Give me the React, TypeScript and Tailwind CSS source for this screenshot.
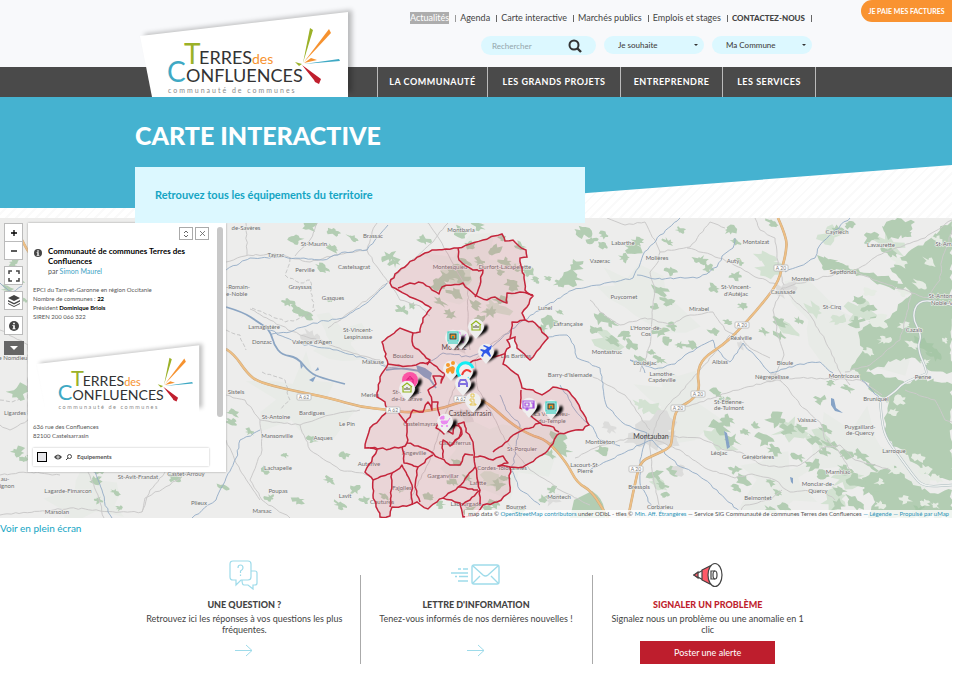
import React from "react";

type Pt = [number, number];

/* ---------- geometry helpers for the map ---------- */

const noise = (n: number) => {
  const v = Math.sin(n * 127.1) * 43758.5453;
  return v - Math.floor(v) - 0.5;
};

const parse = (s: string): Pt[] =>
  s.split(" ").map((p) => p.split(",").map(Number) as Pt);

/* Straight segments broken into short, slightly irregular steps. */
const rough = (s: string, amp: number, closed = false) => {
  const pts = parse(s);
  if (closed) pts.push(pts[0]);
  let d = `M${pts[0][0]},${pts[0][1]}`;
  for (let i = 1; i < pts.length; i++) {
    const [x0, y0] = pts[i - 1];
    const [x1, y1] = pts[i];
    const steps = Math.max(1, Math.round(Math.hypot(x1 - x0, y1 - y0) / 4));
    for (let k = 1; k <= steps; k++) {
      const t = k / steps;
      const j = k === steps ? 0 : amp;
      const x = x0 + (x1 - x0) * t + noise(x0 + y1 * 3 + k) * j;
      const y = y0 + (y1 - y0) * t + noise(y0 * 2 + x1 + k * 5) * j;
      d += `L${x.toFixed(1)},${y.toFixed(1)}`;
    }
  }
  return closed ? d + "Z" : d;
};

const smooth = (s: string) => {
  const p = parse(s);
  let d = `M${p[0][0]},${p[0][1]}`;
  for (let i = 1; i < p.length - 1; i++) {
    const mx = (p[i][0] + p[i + 1][0]) / 2;
    const my = (p[i][1] + p[i + 1][1]) / 2;
    d += `Q${p[i][0]},${p[i][1]} ${mx},${my}`;
  }
  const last = p[p.length - 1];
  return d + `L${last[0]},${last[1]}`;
};

const patch = (cx: number, cy: number, r: number) => {
  const n = 15;
  const tilt = noise(cx * 3.3 + cy) * 0.9;
  let d = "";
  for (let i = 0; i < n; i++) {
    const a = (i / n) * Math.PI * 2;
    const k = r * (0.95 + noise(cx * 1.7 + cy * 2.3 + i * 9.1) * 1.1);
    const x = cx + Math.cos(a) * k * 1.1 + Math.sin(a) * k * tilt;
    const y = cy + Math.sin(a) * k * 0.8 + Math.cos(a) * k * 0.2;
    d += `${i ? "L" : "M"}${x.toFixed(1)},${y.toFixed(1)}`;
  }
  return d + "Z";
};

const patches = (s: string) =>
  s
    .split(" ")
    .map((p) => p.split(",").map(Number))
    .map(([x, y, r]) => patch(x, y, r))
    .join("");

/* ---------- map data ---------- */

const WOODS =
  "296,240,6 310,226,6 334,232,5 332,248,5 352,238,4 390,257,6 395,262,5 424,240,5 322,268,5 288,302,6 305,314,6 296,309,5 330,300,3 402,310,5 412,306,4 " +
  "455,272,7 465,262,5 480,262,5 462,278,6 438,285,6 447,276,6 495,250,6 505,262,5 515,268,5 520,246,5 503,238,4 470,245,4 460,232,6 478,226,5 455,293,6 440,302,5 450,314,5 475,305,5 490,312,6 500,300,5 480,318,4 512,285,6 528,272,5 500,272,4 536,280,4 548,278,3 " +
  "571,278,8 560,283,5 576,265,6 583,232,6 592,240,4 550,322,7 543,328,5 560,312,3 " +
  "604,235,4 603,245,4 632,248,7 638,242,5 625,258,5 680,230,4 668,242,4 671,271,5 700,260,6 708,268,5 730,230,5 735,242,4 773,223,5 735,276,5 740,262,4 714,288,5 742,306,4 660,290,6 668,302,6 656,306,4 600,318,7 610,322,6 612,340,6 596,330,5 625,335,5 630,345,6 660,332,6 667,340,5 672,326,5 680,345,4 692,345,5 714,332,5 728,322,4 764,332,4 781,322,6 780,335,5 799,321,4 640,360,5 660,360,5 652,352,4 " +
  "19,392,8 18,452,6 25,459,4 34,460,6 95,480,5 115,492,4 175,478,5 98,362,5 100,470,6 223,487,4 233,413,5 232,422,5 98,500,4 120,508,4 12,270,6 20,280,5 8,290,5 14,262,4 24,300,3 " +
  "250,432,4 265,470,4 298,500,5 330,480,5 345,455,4 355,490,5 312,440,4 285,455,3 340,505,5 365,500,4 270,498,4 " +
  "385,497,4 400,490,3 430,497,5 440,505,4 452,482,5 467,478,4 456,462,4 498,485,6 505,478,4 495,503,5 488,508,4 470,510,6 520,511,6 " +
  "558,440,8 562,450,7 550,454,5 543,500,5 553,490,4 " +
  "602,451,5 655,475,6 662,485,5 675,472,6 665,495,4 720,427,8 732,440,7 728,420,6 745,432,4 717,393,5 725,400,4 755,425,4 777,420,8 788,430,7 765,440,8 774,450,6 800,428,5 735,470,5 742,480,6 736,488,4 770,482,5 778,492,4 798,457,5 813,465,6 822,475,5 830,445,6 826,430,5 815,440,6 847,388,5 820,400,5 830,382,4 845,470,6 860,455,6 855,480,7 840,490,6 870,465,6 838,505,7 855,503,8 870,490,7 785,508,5 770,510,5 825,452,5 846,455,5 " +
  "838,230,5 850,225,4 858,300,5 868,308,6 856,322,6 875,322,5 905,233,5 872,238,6 890,252,6 830,262,7 845,268,6";

const LIGHT_WOODS =
  "770,268,11 766,258,8 815,310,8 838,320,6 650,408,8 641,405,6 718,440,14 660,485,8 790,430,12 845,478,12 835,500,12 830,235,9 860,312,14 790,330,8 495,480,10 820,440,10 610,340,14 100,330,8 456,277,12 495,308,12 890,245,12";

const CLEARINGS =
  "900,262,7 920,285,6 905,325,5 880,322,7 884,340,5 930,262,6 938,240,5 903,292,5 925,362,4 912,345,5 870,292,5 900,400,5 893,412,4 918,458,5 925,470,5 937,478,5 893,470,5 880,482,4 905,500,5 925,503,4 880,505,4 935,505,4 868,352,5 945,340,3";

const BIG_WOODS = [
  "817,255 836,262 860,272 885,276 903,284 890,268 905,256 925,242 945,225 952,221 952,372 928,370 915,358 890,362 866,372 850,370 862,352 858,332 872,322 890,318 902,302 912,294 880,284 850,272 822,268",
  "857,371 882,374 905,384 920,378 952,384 952,480 932,478 912,462 902,452 888,440 884,418 889,402 872,392",
  "862,478 880,470 896,466 905,478 922,490 938,494 952,490 952,518 868,518 874,500",
  "882,226 895,220 915,222 905,236 888,240",
];

const DARK_WOODS = "925,345,8 935,355,6 918,510,5 935,300,5";

const TOWNS =
  "310,336,8 318,340,6 655,425,14 648,440,12 668,436,10 635,440,8 780,292,8 790,286,6 740,345,5 775,378,6 680,470,6 552,500,6 465,414,8 456,347,7 610,428,6";

const RIVERS = [
  "226,270 250,258 280,257 323,260 345,252 367,250 375,240 388,225",
  "272,334 290,332 313,323 343,318 362,306 372,298 387,283",
  "270,330 297,343 337,350 377,362 387,368 400,366",
  "428,364 443,353 470,357 490,348 500,340 517,325 547,305 573,290 600,285 633,278 643,255 660,235 680,218",
  "637,275 655,279 677,278 700,277 717,267 722,256 733,248 735,238",
  "548,337 567,335 574,345 577,358 600,368 607,407 623,423 647,433 640,460 640,483 652,508",
  "590,470 610,460 640,445 652,440 677,465 697,474 717,490 740,512",
  "645,373 640,362 630,360 655,369 675,364 685,355 697,348 713,340 715,348 730,362 743,343 757,358 770,373 800,364 820,362 833,373",
  "785,272 800,266 815,258 820,245 835,230 850,218",
  "862,380 870,388 880,400",
  "95,472 102,490 108,512 112,518",
  "192,518 208,505 216,500 226,478 236,458 240,440 260,430",
  "560,385 575,410 590,425 600,440 620,446",
  "500,395 506,410 520,425 512,470 520,490 540,505",
  "0,283 12,292 22,286",
];

const MAJOR_RIVERS = [
  "226,307 243,312 258,322 270,330 274,345 282,355 297,357 310,373 322,378 345,384",
  "386,370 400,368 414,370 425,372 436,388",
];

const WHITE_RIVERS = [
  "880,398 881,415 885,437 900,457 912,474 923,487 952,485",
  "883,400 895,392 903,383 923,375 928,373 917,348 922,335 912,318 918,300 940,302 952,305",
];

const MOTORWAYS = [
  "778,218 787,238 786,252 783,265 777,285 757,310 737,332 723,345 703,358 697,373 700,390 690,402 677,408 673,423 672,440 670,448 652,456 640,462 634,488 628,518",
  "226,349 234,354 247,373 258,382 290,390 330,398 360,407 390,410 410,413 440,409 460,402 475,399 487,402 510,423 530,435 547,440 567,463 577,483 592,491 608,518",
  "22,240 27,250 32,256",
];

const ROADS = [
  "226,262 245,256 275,254 310,262 335,255 367,250 373,262 388,282",
  "246,218 247,255",
  "320,218 310,240 295,256",
  "367,250 372,232 380,218",
  "250,309 270,320 300,335 318,340 350,352 380,360 386,366",
  "328,328 350,312 372,296 392,278 410,262 433,242 450,220",
  "390,283 400,300 420,306 430,316",
  "424,218 440,240 452,262 468,290 468,320 470,350",
  "510,330 490,345 475,360 460,372 452,395 440,430 430,460 410,500",
  "475,360 478,390 490,410 505,440 530,470 560,490 590,505",
  "590,300 600,312 620,325 645,318 655,320 670,325 690,315 713,312 725,330 737,335",
  "607,218 625,225 645,222 655,240 660,252 658,262 650,272 655,290 652,320 650,345 640,372",
  "660,252 690,247 710,222 725,228",
  "687,248 712,255 730,262 752,275 777,285",
  "755,218 760,230 775,238 778,265 784,285",
  "782,288 800,305 812,318 825,340 840,372 850,385",
  "782,288 773,310 778,335 784,355 775,375 785,385 800,405 822,425",
  "782,288 820,278 855,270 885,252 925,238 952,220",
  "855,272 880,282 912,293 952,305",
  "740,335 750,348 770,358",
  "730,335 700,370 660,415 652,436",
  "673,410 700,402 730,392 775,380 800,378 860,380 882,395",
  "655,436 700,438 715,445 725,450 740,452 762,465 782,467 800,465 822,448 840,445 855,460 890,470",
  "822,425 825,440 838,450 850,470",
  "655,440 680,450 705,468 735,478 752,474 775,480 790,492 822,490 835,500",
  "650,440 652,470 658,500 660,518",
  "650,436 620,440 595,448 575,458",
  "590,375 625,395 650,430",
  "735,518 745,505 770,500 782,490",
  "0,330 28,345 28,420 10,430 0,425",
  "226,395 245,400 260,420 262,450 250,480 262,500 290,518",
  "260,420 300,425 330,415 360,410",
  "300,425 310,450 340,470 370,475",
  "226,440 240,470 260,500",
  "88,472 98,495 104,518",
  "165,472 150,490 142,512",
  "190,470 170,485 145,498 142,512 120,512 70,508 0,515",
  "0,475 30,472 60,475",
  "912,293 905,320 900,340 870,365 845,372",
  "952,230 942,260 940,280 930,295",
  "905,390 935,400 945,420 952,422",
];

const LIMITS = [
  "290,258 285,275 300,283 310,280 312,300 315,310 300,318 285,322 270,315 250,308",
  "226,330 240,335 246,350",
  "0,400 12,402 22,398",
  "262,372 285,380 290,400 280,410",
];

const TERRITORY =
  "390,283 395,274 408,264 420,256 432,250 446,249 458,248 470,244 483,240 494,236 502,234 505,241 513,240 519,246 526,250 527,257 520,258 522,268 524,278 525,290 533,296 527,307 522,313 525,320 535,323 548,338 540,348 530,360 517,348 515,337 507,340 510,347 505,353 503,364 518,375 522,388 533,390 542,395 553,387 567,390 577,402 583,413 589,425 583,430 568,432 557,435 550,447 542,455 523,467 510,467 510,492 497,502 483,505 475,515 463,517 460,503 443,498 437,502 428,509 417,502 410,505 392,507 390,516 380,517 373,495 373,480 365,472 377,450 365,448 370,428 388,410 385,402 377,397 380,377 388,364 382,342 400,328 413,333 420,332 423,318 431,308 422,302 410,297 398,290 392,287";

const BOUNDARIES = [
  "458,248 459,260 466,266 473,270 483,270 480,285 475,297",
  "398,288 410,283 423,283 432,290 439,294 442,287 463,283 475,295 487,300 495,297 507,303 507,293 520,292 533,295",
  "413,333 412,341 415,348 430,360 427,365",
  "387,364 408,366 430,362 443,373 460,368 477,360 492,357 506,354",
  "525,320 512,322 510,338",
  "388,410 398,412 406,423 413,410 423,412 428,402 432,410 432,402 428,390 436,384 433,376 443,377 441,383 445,372",
  "432,402 438,402 438,410 440,418 436,428 444,434 446,430 453,434 455,425 461,428 459,438 450,446 443,440 443,458",
  "452,445 462,434 458,424 464,422 466,432 473,442 474,457 480,456 493,460 503,456 508,463 498,466 510,467",
  "493,452 502,446 517,433 540,423 530,415 520,408 521,390",
  "540,423 550,426 559,432",
  "407,423 407,443 418,446 433,453 450,465 460,465 465,454 473,455",
  "370,448 390,449 402,447 407,443",
  "402,447 404,463 418,467 433,455",
  "418,467 415,487 420,502",
  "373,480 392,473 402,465 412,485 412,505",
  "392,473 390,507",
  "475,467 465,479 458,487 443,498",
  "474,457 477,478 480,490 480,504",
  "458,487 468,489 478,490",
  "462,505 470,500 480,490",
];

type Label = [number, number, string];
const LABELS: Label[] = [
  [246, 230, "de-Savères"], [276, 257, "Tayrac"], [314, 246, "St-Maurin"], [373, 238, "Brassac"],
  [305, 272, "Perville"], [354, 269, "Castelsagrat"], [238, 289, "-Romain-"], [236, 296, "le-Noble"],
  [300, 289, "Grayssas"], [333, 300, "Gasques"], [264, 329, "Lamagistère"], [262, 344, "Donzac"],
  [312, 344, "Valence d'Agen"], [358, 332, "St-Vincent-"], [358, 339, "Lespinasse"], [373, 364, "Malause"],
  [403, 358, "Boudou"], [461, 232, "Montbarla"], [450, 269, "Montesquieu"], [505, 269, "Durfort-Lacapelette"],
  [545, 310, "Lunel"], [568, 326, "Lafrançaise"], [516, 358, "Les Barthes"], [570, 377, "Barry-d'Islemade"],
  [607, 354, "Montastruc"], [370, 397, "Merles"], [407, 394, "St-Nicolas-"], [407, 401, "de-la-Grave"],
  [421, 426, "Castelmayran"], [455, 445, "Castelferrus"], [414, 455, "Angeville"], [443, 478, "Garganvillar"],
  [402, 490, "Fajolles"], [382, 504, "Coutures"], [478, 485, "Lafitte"], [466, 506, "Labourgade"],
  [502, 470, "Cordes-Tolosannes"], [522, 451, "St-Porquier"], [552, 416, "La Ville-Dieu-"], [552, 423, "du-Temple"],
  [559, 499, "Montech"], [585, 467, "Lacourt-St-"], [585, 473, "Pierre"], [600, 444, "Montbeton"],
  [516, 509, "Bourret"], [369, 466, "Auterive"], [345, 498, "Lavit"],
  [312, 415, "Bardigues"], [276, 419, "St-Antoine"], [277, 438, "Mansonville"], [278, 470, "Lachapelle"],
  [278, 493, "Poupas"], [262, 513, "Marsac"], [323, 440, "Asques"], [347, 426, "Le Pin"],
  [623, 245, "Labarthe"], [657, 260, "Molières"], [600, 263, "Vazerac"], [733, 263, "Auty"],
  [756, 244, "Montalzat"], [837, 234, "Cayriech"], [881, 247, "Lavaurette"], [948, 246, "St-Amans"],
  [843, 274, "Septfonds"], [803, 281, "Monteils"], [783, 294, "Caussade"], [736, 289, "St-Vincent-"],
  [736, 296, "d'Autéjac"], [624, 299, "Puycornet"], [699, 311, "Mirabel"], [832, 309, "St-Cirq"],
  [944, 298, "St-Antonin-"], [944, 305, "Noble-Val"], [646, 330, "L'Honor-de-"], [646, 336, "Cos"],
  [741, 340, "Réalville"], [914, 332, "Cazals"], [645, 365, "Loubéjac"], [720, 364, "Albias"],
  [785, 365, "Bioule"], [662, 376, "Lamothe-"], [662, 382, "Capdeville"], [772, 379, "Nègrepelisse"],
  [844, 378, "Montricoux"], [923, 379, "Penne"], [729, 404, "St-Étienne-"], [729, 410, "de-Tulmont"],
  [876, 401, "Bruniquel"], [807, 422, "Vaissac"], [860, 429, "Puygaillard-"], [860, 435, "de-Quercy"],
  [719, 455, "Léojac"], [758, 459, "Génébrières"], [894, 453, "Larroque"], [838, 474, "Marnhiac"],
  [818, 486, "Monclar-de-"], [818, 493, "Quercy"], [639, 489, "Bressols"], [758, 500, "Belmontet"],
  [660, 509, "Corbarieu"], [13, 360, "e Nomdieu"], [15, 415, "Ligardes"], [5, 481, "au-"],
  [7, 488, "ignon"], [138, 479, "St-Avit-Frandat"], [186, 476, "Castet-Arrouy"], [68, 493, "Lagarde-Fimarcon"],
  [57, 514, "Marsolan"], [199, 505, "Plieux"], [236, 394, "Sistels"],
];

const SHIELDS: Pt[] = [[781, 268], [742, 325], [698, 394], [678, 408], [636, 469]];

/* ---------- pins ---------- */

type PinKind = "museum" | "house" | "plane" | "paw" | "sport" | "bag" | "car" | "info" | "stroller" | "van";

const Glyph = ({ kind }: { kind: PinKind }) => {
  switch (kind) {
    case "museum":
      return (
        <g fill="none" stroke="#3ccfc0" strokeWidth="1.2">
          <rect x="-5" y="-5" width="10" height="9" />
          <path d="M-5,6H5" />
          <rect x="-3" y="-3" width="6" height="5" fill="#f08a24" stroke="#25584e" />
          <path d="M-1,-1H1V1H-1Z" fill="#27a090" stroke="none" />
        </g>
      );
    case "house":
      return (
        <g fill="none" stroke="#93b51d" strokeWidth="1.2">
          <path d="M-5,-1L0,-5L5,-1M-4,-1V4H4V-1" />
          <path d="M-2,2V0M0,2V-1M2,2V0" stroke="#50502a" strokeWidth="1" />
        </g>
      );
    case "plane":
      return <path d="M-5,5L-3,1L-6,-1L-5,-2L-1,-1L1,-3L-3,-5L-2,-6L3,-4L6,-6L5,-2L3,0L5,5L4,6L0,2L-2,3L-3,6Z" fill="#3158e8" />;
    case "paw":
      return (
        <g fill="#f59a2b">
          <circle cx="-3" cy="-3" r="2" />
          <circle cx="2" cy="-5" r="2" />
          <path d="M-5,1L-1,-1L2,-2L4,0L3,5L1,6L-1,3L-3,6L-5,4Z" />
        </g>
      );
    case "sport":
      return (
        <g fill="none">
          <path d="M4,7A8,8 0 1 1 8,-3" stroke="#12eef4" strokeWidth="3" />
          <path d="M-3,4Q0,-4 6,1" stroke="#ee3d35" strokeWidth="2" />
        </g>
      );
    case "bag":
      return (
        <g>
          <circle r="8" fill="#fb55a5" />
          <path d="M-3,-1H3V4H-3ZM-2,-1Q0,-6 2,-1" fill="none" stroke="#e0187e" />
        </g>
      );
    case "car":
      return <path d="M-5,4V0L-3,-4H3L5,0V4H3V2H-3V4ZM-3,0H3L2,-2H-2Z" fill="#8070e0" fillRule="evenodd" />;
    case "info":
      return <path d="M-2,-6H1V-3H-2ZM-3,-1H1V4H3V5H-3V4H-1V1H-3Z" fill="none" stroke="#e6c34a" strokeWidth="0.9" />;
    case "stroller":
      return (
        <g fill="#e98af0" stroke="#e98af0">
          <path d="M-4,0H3Q3,3 -1,3Q-4,3 -4,0ZM-1,-2V-5Q-5,-5 -5,-2Z" />
          <path d="M3,0L5,-3" fill="none" />
          <circle cx="-3" cy="5" r="0.700" />
          <circle cx="2" cy="5" r="0.700" />
        </g>
      );
    case "van":
      return (
        <g fill="none" stroke="#a653e0" strokeWidth="1.2">
          <path d="M-6,-4H5V3H-6ZM-4,-2H0V1H-4ZM2,-2H4V3" />
          <circle cx="-2" cy="4" r="1" />
        </g>
      );
  }
};

const PINS: { x: number; y: number; kind: PinKind }[] = [
  { x: 461, y: 337, kind: "stroller" },
  { x: 476, y: 326, kind: "house" },
  { x: 453, y: 337, kind: "museum" },
  { x: 486, y: 351, kind: "plane" },
  { x: 451, y: 368, kind: "paw" },
  { x: 465, y: 371, kind: "sport" },
  { x: 410, y: 380, kind: "bag" },
  { x: 407, y: 388, kind: "house" },
  { x: 463, y: 383, kind: "car" },
  { x: 473, y: 400, kind: "info" },
  { x: 445, y: 421, kind: "stroller" },
  { x: 529, y: 405, kind: "van" },
  { x: 551, y: 407, kind: "museum" },
];

const Pin = ({ x, y, kind }: { x: number; y: number; kind: PinKind }) => (
  <g transform={`translate(${x} ${y})`}>
    <path d="M1,12L5,5L10,-2Q14,1 10,6Z" fill="#000" filter="url(#pin-shadow)" />
    <path d="M-6,6A8,8 0 1 1 6,6L0,13Z" fill="#efefef" />
    <Glyph kind={kind} />
  </g>
);

const MapDrawing = () => (
  <svg
    viewBox="0 218 952 300"
    preserveAspectRatio="xMidYMid slice"
    className="block h-[300px] w-full bg-[#ededec] font-['Lato','Open_Sans',sans-serif]"
    role="img"
    aria-label="Carte des équipements du territoire"
  >
    <defs>
      <filter id="pin-shadow" x="-50%" y="-50%" width="200%" height="200%">
        <feGaussianBlur stdDeviation="1.2" />
      </filter>
    </defs>
    <path
      d={patches("300,400,40 500,450,50 680,400,40 840,330,45 860,450,45 90,500,30 470,270,40 640,300,35 340,340,25 780,480,35")}
      fill="#e8ebe7"
    />
    <path d={patches(LIGHT_WOODS)} fill="#d3e2d2" />
    <g fill="#b3cdb3">
      {BIG_WOODS.map((s) => <path key={s} d={rough(s, 5, true)} />)}
      <path d={patches(WOODS)} />
      <path d="M592,491Q606,500 605,518H570L574,500Z" />
    </g>
    <path d={patches(DARK_WOODS)} fill="#a6c7a7" />
    <path d={patches(CLEARINGS)} fill="#e6ece4" />
    <path d={patches(TOWNS)} fill="#dcdcdb" />
    <g fill="none" stroke="#cbcaca">
      {ROADS.map((s) => <path key={s} d={rough(s, 1.6)} />)}
    </g>
    <g fill="none" stroke="#bdbdbd" strokeWidth="0.8" strokeDasharray="4 2">
      {LIMITS.map((s) => <path key={s} d={rough(s, 2)} />)}
    </g>
    <g fill="none" stroke="#93abc6" strokeWidth="0.9">
      {RIVERS.map((s) => <path key={s} d={rough(s, 2)} />)}
    </g>
    <g fill="none" stroke="#8ba5c3" strokeWidth="1.8">
      {MAJOR_RIVERS.map((s) => <path key={s} d={smooth(s)} />)}
    </g>
    <g fill="none">
      {WHITE_RIVERS.map((s) => (
        <React.Fragment key={s}>
          <path d={smooth(s)} stroke="#a9b9bd" strokeWidth="2.4" />
          <path d={smooth(s)} stroke="#f0f2f0" strokeWidth="1.4" />
        </React.Fragment>
      ))}
    </g>
    <g fill="#86a3c6">
      <path d="M724,431L727,433L730,447L727,449Z" />
      <path d="M831,398L834,399L836,408L843,413L835,411L831,405Z" />
      <path d="M790,477L793,478L793,484L791,482Z" />
      <path d="M416,365L425,368L432,373L430,380L424,377L418,372Z" />
      <path d="M300,362L303,366L301,369ZM315,371L318,367L319,370ZM309,380L316,376L313,382Z" />
    </g>
    {MOTORWAYS.map((s) => (
      <g key={s} fill="none">
        <path d={smooth(s)} stroke="#c9a77c" strokeWidth="2.6" />
        <path d={smooth(s)} stroke="#eebf85" strokeWidth="1.8" />
      </g>
    ))}
    <g className="text-[6px]" fill="#6d6d6d" textAnchor="middle" stroke="#efefee" strokeWidth="1.2">
      {LABELS.map(([x, y, t]) => (
        <text key={t + x} x={x} y={y} className="[paint-order:stroke]">{t}</text>
      ))}
    </g>
    <g className="text-[7px]" fill="#3f3f3f" textAnchor="middle">
      <text x="651" y="439">Montauban</text>
      <text x="470" y="416">Castelsarrasin</text>
      <text x="454" y="350">Moissac</text>
    </g>
    <path d={rough(TERRITORY, 2, true)} fill="#dc5a6b" fillOpacity="0.16" stroke="#c4253b" strokeWidth="1.5" />
    <g fill="none" stroke="#c4253b" strokeWidth="1.5" strokeLinejoin="round">
      {BOUNDARIES.map((s) => <path key={s} d={rough(s, 2)} />)}
    </g>
    {[...SHIELDS, [304, 397] as Pt, [393, 410] as Pt, [461, 399] as Pt].map(([x, y], i) => (
      <g key={x}>
        <rect x={x - 7} y={y - 3} width="14" height="6" rx="1" fill="#fff" stroke="#b5b5b5" strokeWidth="0.8" />
        <text x={x} y={y + 2} className="text-[5px]" fill="#777" textAnchor="middle">{i < 5 ? "A 20" : "A 62"}</text>
      </g>
    ))}
    {PINS.map((p) => <Pin key={`${p.x}-${p.y}`} {...p} />)}
  </svg>
);

/* ---------- brand ---------- */

const Logo = ({ id, className }: { id: string; className: string }) => (
  <svg viewBox="138 4 220 93" className={className} role="img" aria-label="Terres des Confluences, communauté de communes">
    <defs>
      <filter id={id} x="-10%" y="-20%" width="120%" height="140%">
        <feGaussianBlur stdDeviation="2.5" />
      </filter>
    </defs>
    <path d="M144,34L352,10V92H156Z" fill="#000" opacity="0.25" filter={`url(#${id})`} />
    <path d="M140,36L348,12V97H152Z" fill="#fff" />
    <g className="font-['Lato',sans-serif]" fill="#333">
      <text x="184" y="64" className="text-[28px]" fill="#9bb128">T</text>
      <text x="199" y="64" className="text-[18px]">ERRES</text>
      <text x="252" y="64" className="text-[14px]" fill="#f6922f">des</text>
      <text x="167" y="82" className="text-[28px]" fill="#3fa9c4">C</text>
      <text x="186" y="82" className="text-[18px]">ONFLUENCES</text>
      <text x="168" y="93" className="text-[7px] tracking-[2px]" fill="#8a8a8a">communauté de communes</text>
    </g>
    <path d="M310,28L313,30L303,63Z" fill="#9bb128" />
    <path d="M295,62L302,64L299,66Z" fill="#9bb128" />
    <path d="M329,29L331,33L304,62Z" fill="#f6922f" />
    <path d="M304,63L311,58L317,60Z" fill="#f6922f" />
    <path d="M304,64L339,59L340,61Z" fill="#3fa9c4" />
    <path d="M302,65L321,79L319,84L315,82L314,80Z" fill="#c01f2e" />
  </svg>
);

/* ---------- header ---------- */

const LINKS = ["Agenda", "Carte interactive", "Marchés publics", "Emplois et stages"];

const Caret = () => (
  <svg viewBox="0 0 6 4" className="pointer-events-none absolute right-[6px] top-2 w-1" aria-hidden="true">
    <path d="M0,0H6L3,3Z" fill="#333" />
  </svg>
);

const Choice = ({ label }: { label: string }) => (
  <div className="relative w-[100px]">
    <select
      aria-label={label}
      className="block h-[18px] w-full appearance-none rounded-full bg-[#dcf8ff] pl-[14px] text-[8px] font-medium text-[#444]"
    >
      <option>{label}</option>
    </select>
    <Caret />
  </div>
);

const NAV = ["LA COMMUNAUTÉ", "LES GRANDS PROJETS", "ENTREPRENDRE", "LES SERVICES"];

const Header = () => (
  <header className="relative">
    <a href="#paiement" className="absolute right-0 top-0 flex h-[22px] w-[91px] items-center justify-center rounded-l-full bg-[#f99331] text-[7px] font-bold text-white">
      JE PAIE MES FACTURES
    </a>
    <div className="h-[67px] bg-[#f8f9fb]">
      <div className="mx-auto flex max-w-[682px] flex-col items-end pr-[5px] pt-3">
        <ul className="flex h-3 items-center text-[9px] leading-3 text-[#444]">
          <li className="flex items-center gap-[6px]">
            <a href="#actualites" className="bg-[#adadad] text-white">Actualités</a>
            <i className="mr-1 h-[7px] w-px bg-[#999]" />
          </li>
          {LINKS.map((l) => (
            <li key={l} className="flex items-center gap-[6px]">
              <a href="#menu">{l}</a>
              <i className="mr-1 h-[7px] w-px bg-[#666]" />
            </li>
          ))}
          <li className="flex items-center gap-[6px] font-black">
            <a href="#contact" className="text-[8px]">CONTACTEZ-NOUS</a>
            <i className="h-[7px] w-px bg-[#666]" />
          </li>
        </ul>
        <div className="mt-3 flex gap-2">
          <form className="flex h-[19px] w-[115px] items-center rounded-full bg-[#dcf8ff] pl-[11px] pr-[14px]">
            <input aria-label="Rechercher" placeholder="Rechercher" className="w-full min-w-0 bg-transparent text-[8px] outline-none placeholder:text-[#93a5ab]" />
            <button type="button" aria-label="Lancer la recherche">
              <svg viewBox="0 0 14 14" className="w-[14px]" fill="none" stroke="#333">
                <circle cx="6" cy="6" r="4.5" strokeWidth="2" />
                <path d="M9.500,9.500L13,13" strokeWidth="2.400" />
              </svg>
            </button>
          </form>
          <Choice label="Je souhaite" />
          <Choice label="Ma Commune" />
        </div>
      </div>
    </div>
    <nav className="h-[30px] bg-[#4a4a4a]">
      <ul className="mx-auto grid h-full max-w-[682px] grid-cols-[110px_133px_102px_94px] pl-[242px]">
        {NAV.map((n) => (
          <li key={n} className="flex items-center justify-center border-l border-[#bbb] text-[9px] font-bold tracking-[0.5px] text-white last:border-r">
            <a href="#rubrique" className="whitespace-nowrap">{n}</a>
          </li>
        ))}
      </ul>
    </nav>
    <div className="pointer-events-none absolute inset-x-0 bottom-0">
      <div className="mx-auto max-w-[682px]">
        <Logo id="logo-shadow-header" className="ml-[3px] block w-[220px]" />
      </div>
    </div>
  </header>
);

/* ---------- map section ---------- */

const CTRL = "flex h-[19px] w-[19px] items-center justify-center border border-[#bbb] bg-white text-[#222]";

const InfoIcon = ({ className }: { className: string }) => (
  <svg viewBox="0 0 12 12" className={className} aria-hidden="true">
    <circle cx="6" cy="6" r="6" fill="#444" />
    <path d="M5,2H7V4H5ZM4,5H7V9H8V10H4V9H5V6H4Z" fill="#fff" />
  </svg>
);

const Controls = () => (
  <div className="absolute left-1 top-[5px] flex flex-col gap-[6px]">
    <div className="flex flex-col">
      <button aria-label="Zoom avant" className={CTRL}>
        <svg viewBox="0 0 8 8" className="w-2" stroke="#000" strokeWidth="1.3"><path d="M1,4H7M4,1V7" /></svg>
      </button>
      <button aria-label="Zoom arrière" className={`${CTRL} -mt-px`}>
        <svg viewBox="0 0 8 8" className="w-2" stroke="#000" strokeWidth="1.3"><path d="M1,4H7" /></svg>
      </button>
    </div>
    <button aria-label="Plein écran" className={CTRL}>
      <svg viewBox="0 0 12 12" className="w-3" fill="none" stroke="#444" strokeWidth="1.5"><path d="M1,4V1H4M8,1H11V4M11,8V11H8M4,11H1V8" /></svg>
    </button>
    <button aria-label="Calques" className={CTRL}>
      <svg viewBox="0 0 12 12" className="w-3" fill="#444"><path d="M6,0L12,3L6,6L0,3ZM0,5L6,8L12,5V6.500L6,9.500L0,6.500ZM0,8L6,11L12,8V9L6,12L0,9Z" /></svg>
    </button>
    <button aria-label="À propos" className={CTRL}><InfoIcon className="w-[10px]" /></button>
    <button aria-label="Plus" className="flex h-[14px] w-5 items-center justify-center bg-[#666]">
      <svg viewBox="0 0 8 4" className="w-2" fill="#fff"><path d="M0,0H8L4,4Z" /></svg>
    </button>
  </div>
);

const Panel = () => (
  <aside className="absolute left-7 top-[5px] flex h-[249px] w-[198px] bg-white font-['Lato',sans-serif] text-[6px] leading-[9px] text-[#555] shadow-[0_0_2px_#999]">
    <div className="ml-[5px] w-[176px]">
      <div className="flex justify-end gap-[2px] pt-1">
        <button aria-label="Agrandir" className="flex h-[13px] w-[14px] items-center justify-center border border-[#aaa]">
          <svg viewBox="0 0 6 8" className="w-[6px]" fill="none" stroke="#666"><path d="M1,3L3,1L5,3M1,5L3,7L5,5" /></svg>
        </button>
        <button aria-label="Fermer" className="flex h-[13px] w-[14px] items-center justify-center border border-[#aaa]">
          <svg viewBox="0 0 6 6" className="w-[5px]" fill="none" stroke="#666"><path d="M0,0L6,6M6,0L0,6" /></svg>
        </button>
      </div>
      <div className="mt-[6px] flex gap-[6px] pl-px">
        <InfoIcon className="mt-[3px] h-2 w-2 shrink-0" />
        <div>
          <h2 className="text-[8px] font-bold leading-[10px] text-black">Communauté de communes Terres des Confluences</h2>
          <p className="text-[7px] leading-[11px]">par <a href="#auteur" className="text-[#3fa3c4]">Simon Maurel</a></p>
        </div>
      </div>
      <div className="mt-2">
        <p>EPCI du Tarn-et-Garonne en région Occitanie</p>
        <p>Nombre de communes : <b className="text-black">22</b></p>
        <p>Président <b className="text-black">Dominique Briois</b></p>
        <p>SIREN 200 066 322</p>
      </div>
      <Logo id="logo-shadow-panel" className="ml-[2px] mt-[18px] block w-[172px]" />
      <p className="mt-[10px]">636 rue des Confluences</p>
      <p>82100 Castelsarrasin</p>
      <div className="mt-2 flex h-[18px] items-center pl-1 shadow-[0_0_2px_#bbb]">
        <input type="checkbox" aria-label="Equipements" className="h-[10px] w-[10px] appearance-none border border-black bg-[#e5e5e8]" />
        <svg viewBox="0 0 8 6" className="ml-[7px] w-2" fill="#444"><path d="M0,3Q4,-2 8,3Q4,8 0,3Z" /><circle cx="4" cy="3" r="1.500" fill="#fff" /><circle cx="4" cy="3" r="0.700" /></svg>
        <svg viewBox="0 0 6 6" className="ml-1 w-[6px]" fill="none" stroke="#444"><circle cx="3.500" cy="2.500" r="2" /><path d="M2,4L0,6" /></svg>
        <b className="ml-[5px]">Equipements</b>
      </div>
    </div>
    <div className="ml-auto mr-[3px] mt-1 h-[190px] w-[6px] rounded-full bg-[#c8c8c8]" />
  </aside>
);

const Attribution = () => (
  <div className="absolute bottom-0 right-0 whitespace-nowrap bg-white/80 px-[3px] text-[6px] leading-[8px] text-[#555]">
    map data © <a href="#osm" className="text-[#2c93b8]">OpenStreetMap contributors</a> under ODbL - tiles ©{" "}
    <a href="#tuiles" className="text-[#2c93b8]">Min. Aff. Étrangères</a> — Service SIG Communauté de communes Terres des Confluences{" "}
    <a href="#legende" className="text-[#2c93b8]">— Légende</a> <a href="#umap" className="text-[#2c93b8]">— Propulsé par uMap</a>
  </div>
);

/* ---------- footer blocks ---------- */

const QuestionIcon = () => (
  <svg viewBox="0 0 30 30" className="w-[30px]" fill="none" stroke="#9edbea" strokeWidth="1.200">
    <path d="M4,1H19Q22,1 22,4V17Q22,20 19,20H12L7,25V20H4Q1,20 1,17V4Q1,1 4,1Z" />
    <path d="M22,11H26Q28,11 28,13V23Q28,25 26,25H24V29L19,25H15Q13,25 13,20" />
    <path d="M9,8Q9,5 11.500,5Q14,5 14,8Q14,9.500 11.500,11V13M11.500,14.500V16" />
  </svg>
);

const MailIcon = () => (
  <svg viewBox="0 0 50 22" className="w-[50px]" fill="none" stroke="#9edbea" strokeWidth="1.400">
    <rect x="21" y="1" width="27" height="19" rx="2" />
    <path d="M22,2L32,11Q34.500,13 37,11L47,2M22,19L29,12M47,19L40,12" />
    <path d="M7,5H10M12,5H17M0,9H17M4,12.500H6M8,12.500H17M7,17H17" />
  </svg>
);

const HornIcon = () => (
  <svg viewBox="0 0 30 26" className="w-[30px]" stroke="#444" strokeWidth="1.200">
    <path d="M1,13L22,2V24Z" fill="#fff" />
    <path d="M1,13L5,10V16ZM9,8L17,4V22L9,18Z" fill="#ff5a68" />
    <ellipse cx="22" cy="13" rx="7" ry="11.500" fill="#fff" />
    <ellipse cx="22" cy="13" rx="2" ry="4" fill="#fff" />
    <path d="M22,9H18V17H22" fill="none" />
  </svg>
);

const Arrow = () => (
  <svg viewBox="0 0 18 13" className="w-[18px]" fill="none" stroke="#9edbea"><path d="M0,6.500H17M11,1L17,6.500L11,12" /></svg>
);

const Block = ({ icon, title, text, red, children }: {
  icon: React.ReactNode; title: string; text: string; red?: boolean; children: React.ReactNode;
}) => (
  <section className="relative flex flex-col items-center px-4 text-center text-[9px] leading-[11px] text-[#444] before:absolute before:bottom-0 before:left-0 before:top-[15px] before:w-px before:bg-[#aaa] first:before:hidden">
    <div className="flex h-[30px] items-center">{icon}</div>
    <h3 className={`mt-[9px] font-black ${red ? "text-[#c01f2e]" : ""}`}>{title}</h3>
    <p className="mt-[3px] h-[22px]">{text}</p>
    {children}
  </section>
);

export default function App() {
  return (
    <div className="mr-[2px] bg-white font-['Lato',sans-serif]">
      <Header />
      <section className="relative z-10 h-[121px] bg-[repeating-linear-gradient(135deg,#fff_0px,#fff_5px,#fafafa_5px,#fafafa_7px)]">
        <div className="h-full bg-[#45b2d0] [clip-path:polygon(0_0,100%_0,100%_68px,41%_111px,0_111px)]">
          <div className="mx-auto max-w-[682px] pt-[23px]">
            <h1 className="text-[25px] font-black leading-[30px] text-white">CARTE INTERACTIVE</h1>
          </div>
        </div>
        <div className="absolute inset-x-0 top-[70px]">
          <div className="mx-auto max-w-[682px]">
            <p className="flex h-14 w-[450px] items-center bg-[#dcf8ff] pl-5 text-[11px] font-bold text-[#14a5c4]">
              Retrouvez tous les équipements du territoire
            </p>
          </div>
        </div>
      </section>
      <section className="relative">
        <MapDrawing />
        <Controls />
        <Panel />
        <Attribution />
      </section>
      <a href="#plein-ecran" className="block text-[10px] leading-[21px] text-[#14a5c4]">Voir en plein écran</a>
      <footer className="mx-auto mt-[21px] grid max-w-[695px] grid-cols-3 pb-6">
        <Block icon={<QuestionIcon />} title="UNE QUESTION ?" text="Retrouvez ici les réponses à vos questions les plus fréquentes.">
          <a href="#question" aria-label="Poser une question" className="mt-[9px]"><Arrow /></a>
        </Block>
        <Block icon={<MailIcon />} title="LETTRE D'INFORMATION" text="Tenez-vous informés de nos dernières nouvelles !">
          <a href="#lettre" aria-label="Lettre d'information" className="mt-[9px]"><Arrow /></a>
        </Block>
        <Block icon={<HornIcon />} title="SIGNALER UN PROBLÈME" text="Signalez nous un problème ou une anomalie en 1 clic" red>
          <button className="mt-[6px] h-[23px] w-[135px] bg-[#be1e2d] text-white">Poster une alerte</button>
        </Block>
      </footer>
    </div>
  );
}
